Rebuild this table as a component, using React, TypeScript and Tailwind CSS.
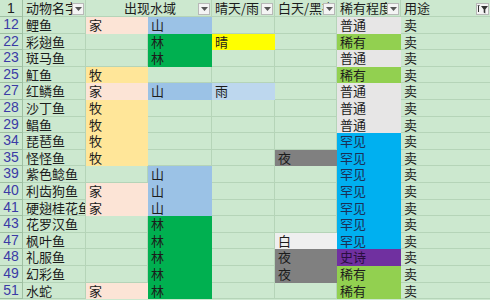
import React from "react";

interface Row {
  num: number;
  name: string;
  home?: string;
  water?: string;
  weather?: string;
  time?: string;
  rare: string;
}

const FILL: Record<string, string> = {
  家: "bg-[#fce4d6] border-[#fce4d6]",
  牧: "bg-[#ffe699] border-[#ffe699]",
  山: "bg-[#9bc2e6] border-[#9bc2e6]",
  林: "bg-[#00b050] border-[#00b050]",
  晴: "bg-[#ffff00] border-[#ffff00]",
  雨: "bg-[#bdd7ee] border-[#bdd7ee]",
  白: "bg-[#efefef] border-[#efefef]",
  夜: "bg-[#808080] border-[#808080]",
  普通: "bg-[#e7e6e6] border-[#e7e6e6]",
  稀有: "bg-[#92d050] border-[#92d050]",
  罕见: "bg-[#00b0f0] border-[#00b0f0] text-[#1b2f55]",
  史诗: "bg-[#7030a0] border-[#7030a0] text-[#2a0f3f]",
};

const rows: Row[] = [
  { num: 12, name: "鲤鱼", home: "家", water: "山", rare: "普通" },
  { num: 22, name: "彩翅鱼", water: "林", weather: "晴", rare: "稀有" },
  { num: 23, name: "斑马鱼", water: "林", rare: "普通" },
  { num: 25, name: "魟鱼", home: "牧", rare: "稀有" },
  { num: 27, name: "红鳞鱼", home: "家", water: "山", weather: "雨", rare: "普通" },
  { num: 28, name: "沙丁鱼", home: "牧", rare: "普通" },
  { num: 29, name: "鲳鱼", home: "牧", rare: "普通" },
  { num: 34, name: "琵琶鱼", home: "牧", rare: "罕见" },
  { num: 35, name: "怪怪鱼", home: "牧", time: "夜", rare: "罕见" },
  { num: 39, name: "紫色鲶鱼", water: "山", rare: "罕见" },
  { num: 40, name: "利齿狗鱼", home: "家", water: "山", rare: "罕见" },
  { num: 41, name: "硬翅桂花鱼", home: "家", water: "山", rare: "罕见" },
  { num: 43, name: "花罗汉鱼", water: "林", rare: "罕见" },
  { num: 47, name: "枫叶鱼", water: "林", time: "白", rare: "罕见" },
  { num: 48, name: "礼服鱼", water: "林", time: "夜", rare: "史诗" },
  { num: 49, name: "幻彩鱼", water: "林", time: "夜", rare: "稀有" },
  { num: 51, name: "水蛇", home: "家", water: "林", rare: "稀有" },
];

function DropBtn() {
  return (
    <span className="absolute right-[1px] top-[3px] w-[12px] h-[12px] bg-[#f4f4f4] border border-[#b8b8b8] flex items-center justify-center">
      <svg width="7" height="4" viewBox="0 0 7 4">
        <path d="M0 0h7L3.5 4z" fill="#555" />
      </svg>
    </span>
  );
}

function FilterBtn() {
  return (
    <span className="absolute right-[1px] top-[3px] w-[13px] h-[12px] bg-[#f4f4f4] border border-[#b8b8b8] flex items-center justify-center">
      <svg width="11" height="9" viewBox="0 0 11 9">
        <path d="M0 1h3L2 0z" fill="#333" />
        <path d="M1.5 1v6" stroke="#333" strokeWidth="1" />
        <path d="M4 1h7L8.3 4.5V8.5L6.7 7.5V4.5z" fill="#333" />
      </svg>
    </span>
  );
}

function DataCell({ cell, last }: { cell?: string; last?: boolean }) {
  const fill = cell ? FILL[cell] : undefined;
  return (
    <div
      className={`h-[16.6px] pl-[3px] pt-[1px] overflow-hidden whitespace-nowrap leading-[14.6px] border-b ${
        last ? "" : "border-r"
      } ${fill ?? "border-[#b5d4b8]"}`}
    >
      {cell}
    </div>
  );
}

export default function App() {
  const head =
    "h-[17px] relative pl-[3px] overflow-hidden whitespace-nowrap leading-[16px] border-b border-r border-[#b5d4b8]";
  return (
    <div
      className="w-[490px] h-[300px] overflow-hidden bg-[#cce8cf] text-[13px] text-[#1c1c1c]"
      style={{ fontFamily: '"Noto Sans CJK SC", "Noto Sans", sans-serif' }}
    >
      <div className="grid grid-cols-[23px_63px_62px_64px_63px_62px_64px_89px]">
        <div
          className="h-[17px] border-b border-r border-[#9fbfa2] text-center leading-[16px] text-[14px] text-[#222]"
          style={{ fontFamily: '"Liberation Sans", sans-serif' }}
        >
          1
        </div>
        <div className={head}>
          <span>动物名字</span>
          <DropBtn />
        </div>
        <div className={`${head} col-span-2 text-center`}>
          <span>出现水域</span>
          <DropBtn />
        </div>
        <div className={head}>
          <span>晴天/雨</span>
          <DropBtn />
        </div>
        <div className={head}>
          <span>白天/黑夜</span>
          <DropBtn />
        </div>
        <div className={head}>
          <span>稀有程度</span>
          <DropBtn />
        </div>
        <div className={`${head} border-r-0`}>
          <span>用途</span>
          <FilterBtn />
        </div>

        {rows.map((r) => (
          <React.Fragment key={r.num}>
            <div
              className="h-[16.6px] border-b border-r border-[#9fbfa2] text-center leading-[15.6px] text-[14px] text-[#3b3ba6]"
              style={{ fontFamily: '"Liberation Sans", sans-serif' }}
            >
              {r.num}
            </div>
            <DataCell cell={r.name} />
            <DataCell cell={r.home} />
            <DataCell cell={r.water} />
            <DataCell cell={r.weather} />
            <DataCell cell={r.time} />
            <DataCell cell={r.rare} />
            <DataCell cell="卖" last />
          </React.Fragment>
        ))}
      </div>
    </div>
  );
}
